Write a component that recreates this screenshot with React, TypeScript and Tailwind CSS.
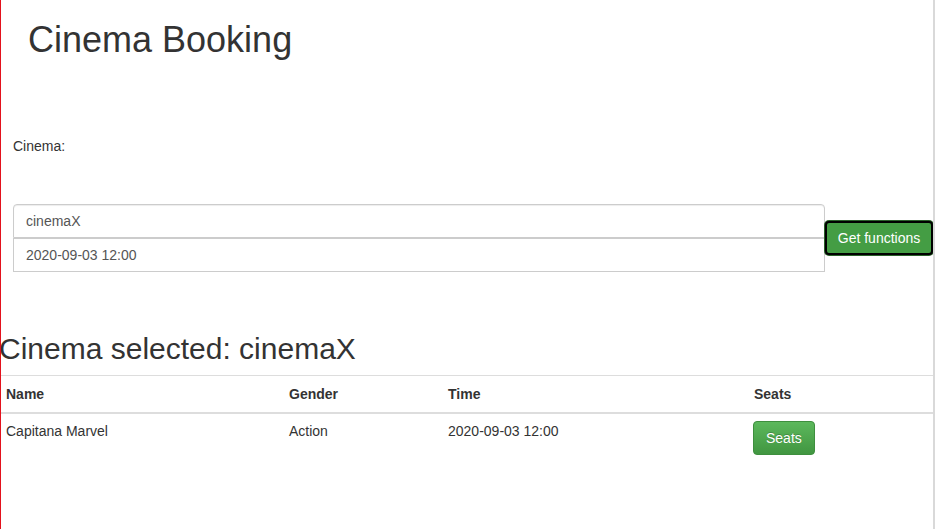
const functions = [
  { name: "Capitana Marvel", gender: "Action", time: "2020-09-03 12:00" },
];

export default function App() {
  return (
    <div
      className="w-[935px] h-[529px] bg-white border-l border-l-[#e3121d] border-r-2 border-r-[#d9d9d9] text-[14px] text-[#333] overflow-hidden"
      style={{ fontFamily: '"Liberation Sans", Arial, sans-serif' }}
    >
      <h1 className="pt-[20px] pl-[27px] text-[36px] leading-[1.1]">Cinema Booking</h1>

      <div className="mt-[76px] pl-[12px] leading-[20px]">Cinema:</div>

      <div className="mt-[48px] pl-[12px] flex items-center">
        <div className="w-[812px] flex flex-col">
          <input
            readOnly
            value="cinemaX"
            className="h-[34px] px-[12px] border border-[#ccc] rounded-t-[4px] text-[#555] shadow-[inset_0_1px_1px_rgba(0,0,0,0.075)] outline-none"
            style={{ fontFamily: "inherit" }}
          />
          <input
            readOnly
            value="2020-09-03 12:00"
            className="h-[34px] px-[12px] border border-[#ccc] text-[#555] outline-none"
            style={{ fontFamily: "inherit" }}
          />
        </div>
        <button className="mt-[1px] h-[34px] w-[108px] bg-[#449d44] text-white rounded-[4px] border-2 border-black ring-1 ring-[#2a5f2a]">
          Get functions
        </button>
      </div>

      <h2 className="mt-[60px] -ml-[2px] text-[30px] leading-[1.1]">Cinema selected: cinemaX</h2>

      <table className="mt-[10px] w-[932px] border-collapse text-left">
        <thead>
          <tr className="border-t border-[#ddd] border-b-2">
            <th className="w-[283px] pl-[5px] py-[8px] leading-[20px] font-bold">Name</th>
            <th className="w-[159px] pl-[5px] py-[8px] leading-[20px] font-bold">Gender</th>
            <th className="w-[306px] pl-[5px] py-[8px] leading-[20px] font-bold">Time</th>
            <th className="pl-[5px] py-[8px] leading-[20px] font-bold">Seats</th>
          </tr>
        </thead>
        <tbody>
          {functions.map((f) => (
            <tr key={f.name}>
              <td className="pl-[5px] pt-[7px] pb-[8px] leading-[20px] align-top">{f.name}</td>
              <td className="pl-[5px] pt-[7px] pb-[8px] leading-[20px] align-top">{f.gender}</td>
              <td className="pl-[5px] pt-[7px] pb-[8px] leading-[20px] align-top">{f.time}</td>
              <td className="pl-[4px] pt-[7px] pb-[8px] leading-[20px] align-top">
                <button className="h-[34px] px-[12px] rounded-[4px] border border-[#3e8f3e] bg-gradient-to-b from-[#5cb85c] to-[#419641] text-white [text-shadow:0_-1px_0_rgba(0,0,0,0.2)]">
                  Seats
                </button>
              </td>
            </tr>
          ))}
        </tbody>
      </table>
    </div>
  );
}
